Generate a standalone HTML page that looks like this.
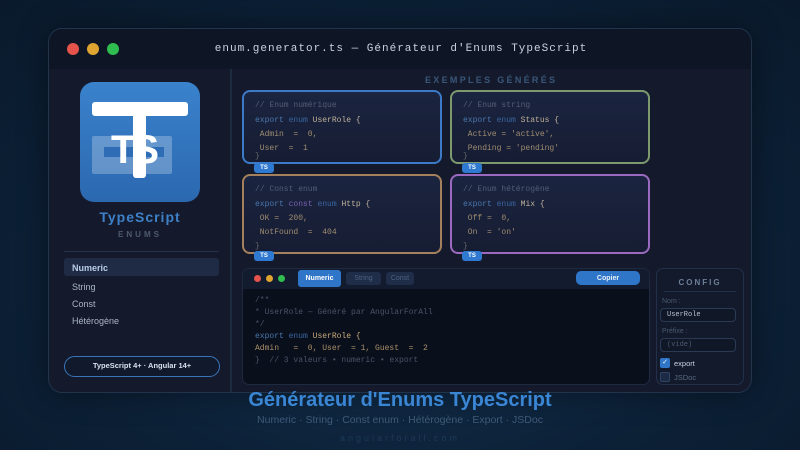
<!DOCTYPE html>
<html><head><meta charset="utf-8"><style>
*{margin:0;padding:0;box-sizing:border-box}
body{width:800px;height:450px;overflow:hidden;background:radial-gradient(ellipse at 50% 60%,#123250 0%,#0c2036 60%,#0a1a2c 100%);font-family:"Liberation Sans",sans-serif;position:relative}
.abs{position:absolute}
.win{left:48px;top:28px;width:704px;height:365px;border-radius:14px;background:#141a2c;border:1px solid #22344c;overflow:hidden;box-shadow:0 0 30px rgba(0,0,0,.4)}
.bar{left:0;top:0;width:704px;height:40px;background:#0e1626}
.dot{width:12px;height:12px;border-radius:50%;top:14px}
.mono{font-family:"Liberation Mono",monospace}
.card{border-radius:8px;background:linear-gradient(#1b2440,#161d33);border:2px solid}
.card div{font-family:"Liberation Mono",monospace;font-size:8px;color:#a08c70;position:absolute;left:11px;white-space:pre}
.cm{color:#535c74!important}
.ex{color:#4a78ad}
.kw{color:#3a66a0}
.nm{color:#bfb09a}
.badge{width:20px;height:10px;border-radius:3px;background:#2f7ad0;color:#fff;font-size:6px;font-weight:bold;text-align:center;line-height:10px}
.code div{font-family:"Liberation Mono",monospace;font-size:8px;position:absolute;left:12px;white-space:pre}
.btn{position:absolute;display:flex;align-items:center;justify-content:center;border-radius:3px;font-family:"Liberation Sans",sans-serif;font-size:7px}
</style></head><body>
<div class="abs win">
 <div class="abs bar"></div>
 <div class="abs dot" style="left:18px;background:#e5534b"></div>
 <div class="abs dot" style="left:38px;background:#e0a530"></div>
 <div class="abs dot" style="left:58px;background:#2ebd4e"></div>
 <div class="abs mono" style="left:0;width:704px;top:14px;text-align:center;font-size:11px;letter-spacing:1px;color:#c9d2de">enum.generator.ts — Générateur d'Enums TypeScript</div>
 <div class="abs" style="left:181px;top:40px;width:2px;height:325px;background:#1e2a40"></div>
</div>
<!-- logo -->
<div class="abs" style="left:80px;top:82px;width:120px;height:120px;border-radius:14px;background:linear-gradient(#3a82cc,#2b68b0)"></div>
<div class="abs" style="left:92px;top:136px;width:80px;height:38px;background:rgba(255,255,255,.25);border-radius:2px"></div>
<div class="abs" style="left:104px;top:147px;width:60px;height:10px;background:#2e6db5"></div>
<div class="abs" style="left:111px;top:130px;font-size:40px;line-height:40px;font-weight:bold;color:#fff;letter-spacing:-3px">TS</div>
<div class="abs" style="left:92px;top:102px;width:96px;height:14px;background:#fff;border-radius:3px"></div>
<div class="abs" style="left:133px;top:102px;width:13px;height:76px;background:#fff;border-radius:3px"></div>
<div class="abs" style="left:60px;width:160px;top:209px;text-align:center;font-size:14px;font-weight:bold;color:#3d80c8;letter-spacing:1px">TypeScript</div>
<div class="abs" style="left:60px;width:160px;top:230px;text-align:center;font-size:8px;font-weight:bold;color:#4e5a6e;letter-spacing:3px">ENUMS</div>
<div class="abs" style="left:64px;top:251px;width:155px;height:1px;background:#25324a"></div>
<div class="abs" style="left:64px;top:258px;width:155px;height:18px;border-radius:3px;background:#1f2b45"></div>
<div class="abs" style="left:72px;top:263px;font-size:9px;font-weight:bold;color:#b8cde6">Numeric</div>
<div class="abs" style="left:72px;top:282px;font-size:9px;color:#aab4c4">String</div>
<div class="abs" style="left:72px;top:299px;font-size:9px;color:#aab4c4">Const</div>
<div class="abs" style="left:72px;top:316px;font-size:9px;color:#aab4c4">Hétérogène</div>
<div class="abs" style="left:64px;top:356px;width:156px;height:21px;border-radius:11px;border:1.5px solid #3a74b8;background:#101a2c;text-align:center;line-height:18px;font-size:7.5px;font-weight:bold;color:#d6e0ee">TypeScript 4+ · Angular 14+</div>
<!-- examples -->
<div class="abs" style="left:425px;top:75px;font-size:9px;font-weight:bold;color:#3a5678;letter-spacing:2.3px">EXEMPLES GÉNÉRÉS</div>
<div class="abs card" style="left:242px;top:90px;width:200px;height:74px;border-color:#3c7ac8">
 <div class="cm" style="top:9px">// Enum numérique</div>
 <div style="top:24px"><span class="ex">export</span> <span class="kw">enum</span> <span class="nm">UserRole {</span></div>
 <div style="top:38px"> Admin  =  0,</div>
 <div style="top:52px"> User  =  1</div>
 <div style="top:60px;color:#666">}</div>
</div>
<div class="abs card" style="left:450px;top:90px;width:200px;height:74px;border-color:#7d9a6e">
 <div class="cm" style="top:9px">// Enum string</div>
 <div style="top:24px"><span class="ex">export</span> <span class="kw">enum</span> <span class="nm">Status {</span></div>
 <div style="top:38px"> Active = 'active',</div>
 <div style="top:52px"> Pending = 'pending'</div>
 <div style="top:60px;color:#666">}</div>
</div>
<div class="abs card" style="left:242px;top:174px;width:200px;height:80px;border-color:#a5805c">
 <div class="cm" style="top:9px">// Const enum</div>
 <div style="top:24px"><span class="ex">export</span> <span style="color:#7a5fb0">const</span> <span class="kw">enum</span> <span class="nm">Http {</span></div>
 <div style="top:38px"> OK =  200,</div>
 <div style="top:52px"> NotFound  =  404</div>
 <div style="top:66px;color:#666">}</div>
</div>
<div class="abs card" style="left:450px;top:174px;width:200px;height:80px;border-color:#9b6ac0">
 <div class="cm" style="top:9px">// Enum hétérogène</div>
 <div style="top:24px"><span class="ex">export</span> <span class="kw">enum</span> <span class="nm">Mix {</span></div>
 <div style="top:38px"> Off =  0,</div>
 <div style="top:52px"> On  = 'on'</div>
 <div style="top:66px;color:#666">}</div>
</div>
<div class="abs badge" style="left:254px;top:163px">TS</div>
<div class="abs badge" style="left:462px;top:163px">TS</div>
<div class="abs badge" style="left:254px;top:251px">TS</div>
<div class="abs badge" style="left:462px;top:251px">TS</div>
<!-- code panel -->
<div class="abs code" style="left:242px;top:268px;width:408px;height:117px;border-radius:7px;background:#0a0f1c;border:1px solid #1e2a40;overflow:hidden">
 <span class="abs" style="left:0;top:0;width:408px;height:20px;background:#131b2e"></span>
 <span class="abs" style="left:11px;top:6px;width:7px;height:7px;border-radius:50%;background:#e5534b"></span>
 <span class="abs" style="left:23px;top:6px;width:7px;height:7px;border-radius:50%;background:#e0a530"></span>
 <span class="abs" style="left:35px;top:6px;width:7px;height:7px;border-radius:50%;background:#2ebd4e"></span>
 <span class="btn" style="left:55px;top:1px;width:43px;height:17px;background:#2f76c8;color:#fff;font-weight:bold">Numeric</span>
 <span class="btn" style="left:103px;top:3px;width:35px;height:13px;background:#1f2d48;color:#4d6080">String</span>
 <span class="btn" style="left:143px;top:3px;width:28px;height:13px;background:#1f2d48;color:#4d6080">Const</span>
 <span class="btn" style="left:333px;top:2px;width:64px;height:14px;border-radius:5px;background:#2f76c8;color:#e8f0fa;font-weight:bold">Copier</span>
 <div style="top:27px;color:#4a5368">/**</div>
 <div style="top:39px;color:#4a5368">* UserRole — Généré par AngularForAll</div>
 <div style="top:51px;color:#4a5368">*/</div>
 <div style="top:63px"><span class="ex">export</span> <span class="kw">enum</span> <span style="color:#c9a97a">UserRole {</span></div>
 <div style="top:75px;color:#a88f68">Admin   =  0, User  = 1, Guest  =  2</div>
 <div style="top:87px;color:#4a5368">}  // 3 valeurs • numeric • export</div>
</div>
<!-- config -->
<div class="abs" style="left:656px;top:268px;width:88px;height:117px;border-radius:7px;background:#121a2c;border:1px solid #22304a"></div>
<div class="abs" style="left:656px;width:88px;top:278px;text-align:center;font-size:8px;font-weight:bold;color:#6d7f99;letter-spacing:2px">CONFIG</div>
<div class="abs" style="left:664px;top:291px;width:72px;height:1px;background:#22304a"></div>
<div class="abs" style="left:662px;top:298px;font-size:7px;color:#4c5a70">Nom :</div>
<div class="abs mono" style="left:660px;top:308px;width:76px;height:14px;border-radius:4px;border:1px solid #2a3a55;background:#101727;font-size:7px;color:#b8c2d0;padding-left:6px;line-height:12px">UserRole</div>
<div class="abs" style="left:662px;top:328px;font-size:7px;color:#4c5a70">Préfixe :</div>
<div class="abs mono" style="left:660px;top:338px;width:76px;height:14px;border-radius:4px;border:1px solid #2a3a55;background:#101727;font-size:7px;color:#4c5a70;padding-left:6px;line-height:12px">(vide)</div>
<div class="abs" style="left:660px;top:358px;width:10px;height:10px;border-radius:2px;background:#2f76c8;color:#fff;font-size:7px;text-align:center;line-height:10px">✓</div>
<div class="abs" style="left:674px;top:359px;font-size:7.5px;color:#c8d2e0">export</div>
<div class="abs" style="left:660px;top:372px;width:10px;height:10px;border-radius:2px;background:#1c2a44;border:1px solid #2e4466"></div>
<div class="abs" style="left:674px;top:373px;font-size:7.5px;color:#5a6a82">JSDoc</div>
<!-- footer -->
<div class="abs" style="left:0;width:800px;top:389px;text-align:center;font-size:20px;font-weight:bold;color:#3a86d4">Générateur d'Enums TypeScript</div>
<div class="abs" style="left:0;width:800px;top:414px;text-align:center;font-size:10.5px;color:#3f5a78">Numeric · String · Const enum · Hétérogène · Export · JSDoc</div>
<div class="abs" style="left:0;width:800px;top:433px;text-align:center;font-size:9px;color:#1e3a58;letter-spacing:3px">angularforall.com</div>
</body></html>
